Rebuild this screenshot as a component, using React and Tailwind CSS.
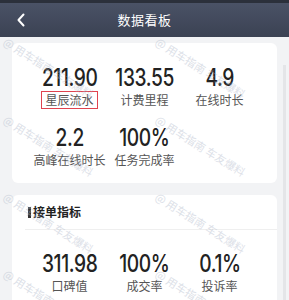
const TOP = [
  { v: '211.90', l: '星辰流水', mark: true },
  { v: '133.55', l: '计费里程' },
  { v: '4.9', l: '在线时长' },
  { v: '2.2', l: '高峰在线时长' },
  { v: '100%', l: '任务完成率' },
]

const ORDERS = [
  { v: '311.98', l: '口碑值' },
  { v: '100%', l: '成交率' },
  { v: '0.1%', l: '投诉率' },
]

// 水印的起点（左上角），每条按同样的角度斜放
const MARKS = [
  [8, -2], [160, -2],
  [8, 76], [160, 76],
  [8, 153], [160, 153],
  [8, 230], [160, 230],
]

function Stat({ v, l, mark }) {
  return (
    <div className="flex flex-col items-center">
      <span className="inline-block scale-x-[0.8] font-['Inter'] text-[24px] leading-[24px] font-medium text-[#222] tracking-[-0.5px]">
        {v}
      </span>
      <span
        className={
          'mt-[2px] whitespace-nowrap text-[12px] leading-[16px] text-[#555] px-[3px] ' +
          (mark ? 'outline outline-1 outline-[#e0434f]' : '')
        }
      >
        {l}
      </span>
    </div>
  )
}

export default function App() {
  return (
    <div className="relative w-[289px] h-[300px] overflow-hidden bg-[#f2f3f5] font-['Noto_Sans_CJK_SC','Noto_Sans',sans-serif]">
      <div className="h-[3px] bg-[#2b303b]" />
      <div className="relative h-[34px] flex items-center justify-center bg-gradient-to-b from-[#4a5266] to-[#3b4253]">
        <svg className="absolute left-[16px] top-[10px]" width="10" height="14" viewBox="0 0 10 14" fill="none">
          <path d="M7.5 1.5 L2.5 7 L7.5 12.5" stroke="#fff" strokeWidth="2" strokeLinecap="round" strokeLinejoin="round" />
        </svg>
        <span className="text-white text-[13px] tracking-[0.5px]">数据看板</span>
      </div>

      <div className="relative px-[12px] pt-[6px] flex flex-col gap-[12px]">
        <div className="bg-white rounded-[6px] h-[140px] px-[20px] pt-[23px] grid grid-cols-3 content-start gap-y-[18px]">
          {TOP.map((s) => (
            <Stat key={s.l} {...s} />
          ))}
        </div>

        <div className="bg-white rounded-[6px] h-[120px]">
          <div className="h-[35px] ml-[13px] pl-[3px] flex items-center gap-[2px] border-b border-[#efefef]">
            <span className="w-[3px] h-[11px] bg-[#333]" />
            <span className="text-[12px] font-bold text-[#222]">接单指标</span>
          </div>
          <div className="px-[20px] pt-[22px] grid grid-cols-3">
            {ORDERS.map((s) => (
              <Stat key={s.l} {...s} />
            ))}
          </div>
        </div>
      </div>

      <div className="pointer-events-none absolute inset-x-0 top-[37px] bottom-0 overflow-hidden">
        {MARKS.map(([x, y]) => (
          <span
            key={x + '-' + y}
            className="absolute origin-top-left rotate-[32deg] whitespace-nowrap text-[11px] leading-[12px] text-[#aab3c6] opacity-40"
            style={{ left: x, top: y }}
          >
            @ 用车指南 车友爆料
          </span>
        ))}
      </div>

      <div className="absolute right-[3px] top-[65px] bottom-0 w-[3px] bg-[#e4e5e8]" />
    </div>
  )
}
